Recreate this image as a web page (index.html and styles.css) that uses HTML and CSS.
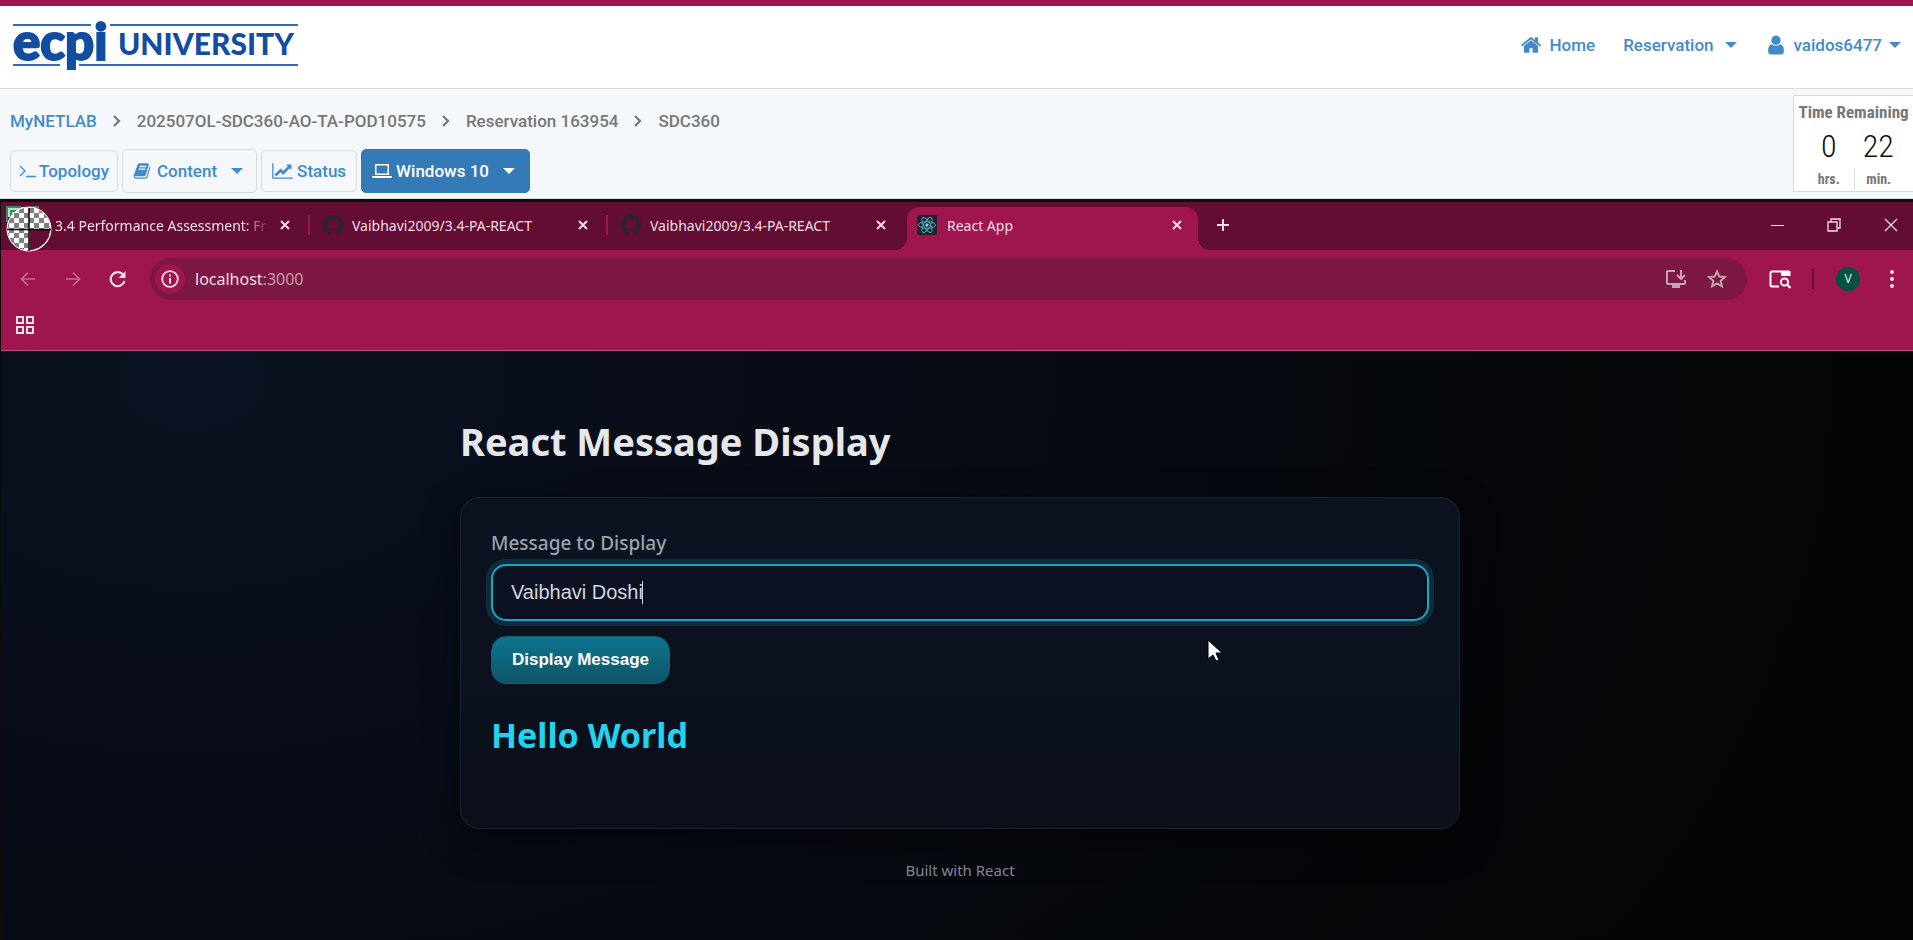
FILE: index.html
```
<!DOCTYPE html>
<html lang="en">
<head>
<meta charset="utf-8">
<title>MyNETLAB - Windows 10</title>
<link rel="stylesheet" href="styles.css">
</head>
<body>
<svg class="defs" aria-hidden="true">
  <symbol id="caret" viewBox="0 0 12 6"><path fill="currentColor" d="M0 0h12L6 6z"/></symbol>
  <symbol id="chev" viewBox="0 0 8 12"><path fill="none" stroke="currentColor" stroke-width="2.200" d="M1 1l5 5-5 5"/></symbol>
  <symbol id="x" viewBox="0 0 10 10"><path fill="none" stroke="currentColor" stroke-width="2" d="M1 1l8 8M9 1L1 9"/></symbol>
  <symbol id="github" viewBox="0 0 16 16"><path fill="#24292e" d="M8 0C3.58 0 0 3.58 0 8c0 3.54 2.29 6.53 5.47 7.59.4.07.55-.17.55-.38 0-.19-.01-.82-.01-1.49-2.01.37-2.53-.49-2.69-.94-.09-.23-.48-.94-.82-1.13-.28-.15-.68-.52-.01-.53.63-.01 1.08.58 1.23.82.72 1.21 1.87.87 2.33.66.07-.52.28-.87.51-1.07-1.78-.2-3.64-.89-3.64-3.95 0-.87.31-1.59.82-2.15-.08-.2-.36-1.02.08-2.12 0 0 .67-.21 2.2.82.64-.18 1.32-.27 2-.27s1.36.09 2 .27c1.53-1.04 2.2-.82 2.2-.82.44 1.1.16 1.92.08 2.12.51.56.82 1.27.82 2.15 0 3.07-1.87 3.75-3.65 3.95.29.25.54.73.54 1.48 0 1.07-.01 1.93-.01 2.2 0 .21.15.46.55.38A8.01 8.01 0 0 0 16 8c0-4.42-3.58-8-8-8z"/></symbol>
</svg>

<header class="site-header">
  <a class="logo" href="#" aria-label="ECPI University">
    <svg width="287" height="54" viewBox="0 0 287 54">
      <g fill="#3b6ab2"><path d="M1 4h78v2H1zM98 4h188v2H98zM1 44h47v2H1zM67 44h219v2H67z"/></g>
      <text class="logo-mark" x="1" y="40">ecpi</text>
      <text class="logo-word" x="106" y="35">UNIVERSITY</text>
    </svg>
  </a>
  <nav class="main-nav">
    <a class="home" href="#"><svg width="22" height="22" viewBox="0 0 1792 1792"><path fill="currentColor" d="M1472 992v480q0 26-19 45t-45 19h-384v-384h-256v384h-384q-26 0-45-19t-19-45v-480q0-1 .5-3t.5-3l575-474 575 474q1 2 1 6zm223-69l-62 74q-8 9-21 11h-3q-13 0-21-7l-692-577-692 577q-12 8-24 7-13-2-21-11l-62-74q-8-10-7-23.5t11-21.5l719-599q32-26 76-26t76 26l244 204v-195q0-14 9-23t23-9h192q14 0 23 9t9 23v408l219 182q10 8 11 21.5t-7 23.5z"/></svg>Home</a>
    <a class="reservation" href="#">Reservation<svg class="caret" width="12" height="6"><use href="#caret"/></svg></a>
    <a class="user" href="#"><svg width="22" height="22" viewBox="0 0 1792 1792"><path fill="currentColor" d="M1536 1399q0 109-62.5 187t-150.5 78h-854q-88 0-150.5-78t-62.5-187q0-85 8.5-160.5t31.5-152 58.5-131 94-89 134.5-34.5q131 128 313 128t313-128q76 0 134.5 34.5t94 89 58.5 131 31.5 152 8.5 160.5zm-256-887q0 159-112.5 271.5t-271.5 112.5-271.5-112.5-112.5-271.5 112.5-271.5 271.5-112.5 271.5 112.5 112.5 271.5z"/></svg>vaidos6477<svg class="caret" width="12" height="6"><use href="#caret"/></svg></a>
  </nav>
</header>

<section class="lab-bar">
  <div class="lab-left">
    <nav class="crumbs" aria-label="Breadcrumb">
      <a href="#">MyNETLAB</a><svg width="8" height="12"><use href="#chev"/></svg>
      <span>202507OL-SDC360-AO-TA-POD10575</span><svg width="8" height="12"><use href="#chev"/></svg>
      <span>Reservation 163954</span><svg width="8" height="12"><use href="#chev"/></svg>
      <span>SDC360</span>
    </nav>
    <div class="lab-tabs">
      <button class="lab-tab topology" type="button"><svg width="17" height="16" viewBox="0 0 17 16"><path fill="none" stroke="currentColor" stroke-width="1.3" d="M1 3l5 5-5 5M7 13.500h10"/></svg>Topology</button>
      <button class="lab-tab tall content" type="button"><svg width="18" height="18" viewBox="0 0 1792 1792"><path fill="currentColor" d="M1703 478q40 57 18 129l-275 906q-19 64-76.500 107.500t-122.500 43.500h-923q-77 0-148.500-53.500t-99.500-131.500q-24-67-2-127 0-4 3-27t4-37q1-8-3-21.500t-3-19.500q2-11 8-21t16.500-23.500 16.500-23.500q23-38 45-91.500t30-91.500q3-10 .5-30t-.5-28q3-11 17-28t17-23q21-36 42-92t25-90q1-9-2.500-32t.5-28q4-13 22-30.500t22-22.500q19-26 42.500-84.500t27.500-96.500q1-8-3-25.500t-2-26.500q2-8 9-18t18-23 17-21q8-12 16.500-30.500t15-35 16-36 19.500-32 26.500-23.500 36-11.500 47.500 5.500l-1 3q38-9 51-9h761q74 0 114 56t18 130l-274 906q-36 119-71.500 153.500t-128.500 34.500h-869q-27 0-38 15-11 16-1 43 24 70 144 70h923q29 0 56-15.500t35-41.500l300-987q7-22 5-57 38 15 59 43zm-1064 2q-4 13 2 22.500t20 9.500h608q13 0 25.500-9.500t16.500-22.500l21-64q4-13-2-22.500t-20-9.500h-608q-13 0-25.500 9.500t-16.500 22.500zm-83 256q-4 13 2 22.500t20 9.500h608q13 0 25.500-9.500t16.500-22.500l21-64q4-13-2-22.500t-20-9.500h-608q-13 0-25.500 9.500t-16.500 22.500z"/></svg>Content<svg class="caret" width="12" height="6"><use href="#caret"/></svg></button>
      <button class="lab-tab status" type="button"><svg width="21" height="18" viewBox="-128 0 2048 1792"><path fill="currentColor" d="M1920 1536v128h-2048v-1536h128v1408h1920zm-128-1248v435q0 21-19.500 29.500t-35.500-7.500l-121-121-633 633q-10 10-23 10t-23-10l-233-233-416 416-192-192 585-585q10-10 23-10t23 10l233 233 464-464-121-121q-16-16-7.500-35.500t29.500-19.500h435q14 0 23 9t9 23z"/></svg>Status</button>
      <button class="lab-tab tall active" type="button"><svg width="20" height="16" viewBox="0 0 20 16"><path fill="none" stroke="currentColor" stroke-width="1.500" d="M3.750 1.750h12.500v9.500H3.750z"/><path fill="currentColor" d="M0 13h20v1l-1 1H1l-1-1z"/></svg>Windows 10<svg class="caret" width="12" height="6"><use href="#caret"/></svg></button>
    </div>
  </div>
  <div class="timer">
    <div class="timer-title">Time Remaining</div>
    <div class="timer-cells">
      <div class="cell"><div class="num">0</div><div class="unit">hrs.</div></div>
      <div class="cell"><div class="num">22</div><div class="unit">min.</div></div>
    </div>
  </div>
</section>

<main class="vm">
  <svg class="touch" width="46" height="46" viewBox="0 0 46 46">
    <defs>
      <pattern id="checks" width="10" height="10" patternUnits="userSpaceOnUse" patternTransform="translate(3 2)"><path fill="#fff" d="M0 0h10v10H0z"/><path fill="#808080" d="M0 0h5v5H0zM5 5h5v5H5z"/></pattern>
    </defs>
    <path fill="#b9dcc6" d="M1 1h28v10H1z"/><path fill="none" stroke="#2f8f5b" stroke-width="2" d="M1 16V1h14M5 12V5h8M27 1h6"/>
    <circle cx="23" cy="23" r="22" fill="url(#checks)"/>
    <path fill="#640d33" d="M24 24h20a21 21 0 0 1-20 20z"/>
    <circle cx="23" cy="23" r="22" fill="none" stroke="#fff" stroke-width="1"/>
    <path stroke="#000" stroke-width="1.500" d="M23 2v43M1 23.500h44"/>
  </svg>
  <div class="tabstrip">
    <div class="tab first"><span class="title fade">3.4 Performance Assessment: Fr</span><button type="button" aria-label="Close tab"><svg width="10" height="10"><use href="#x"/></svg></button></div>
    <div class="tab sep"><svg width="20" height="20"><use href="#github"/></svg><span class="title">Vaibhavi2009/3.4-PA-REACT</span><button type="button" aria-label="Close tab"><svg width="10" height="10"><use href="#x"/></svg></button></div>
    <div class="tab sep"><svg width="20" height="20"><use href="#github"/></svg><span class="title">Vaibhavi2009/3.4-PA-REACT</span><button type="button" aria-label="Close tab"><svg width="10" height="10"><use href="#x"/></svg></button></div>
    <div class="tab current">
      <svg width="20" height="20" viewBox="0 0 20 20"><rect width="20" height="20" rx="2" fill="#20232a"/><g fill="none" stroke="#4fa9bf"><ellipse cx="10" cy="10" rx="8.500" ry="3.300"/><ellipse cx="10" cy="10" rx="8.500" ry="3.300" transform="rotate(60 10 10)"/><ellipse cx="10" cy="10" rx="8.500" ry="3.300" transform="rotate(120 10 10)"/></g><circle cx="10" cy="10" r="1.700" fill="#61dafb"/></svg>
      <span class="title">React App</span><button type="button" aria-label="Close tab"><svg width="10" height="10"><use href="#x"/></svg></button></div>
    <button class="newtab" type="button" aria-label="New tab"><svg width="14" height="14" viewBox="0 0 14 14"><path stroke="currentColor" stroke-width="2" d="M7 1v12M1 7h12"/></svg></button>
    <div class="win">
      <button type="button" aria-label="Minimize"><svg width="14" height="14" viewBox="0 0 14 14"><path stroke="currentColor" d="M1 7.500h13"/></svg></button>
      <button type="button" aria-label="Restore"><svg width="14" height="14" viewBox="0 0 14 14"><path fill="none" stroke="currentColor" stroke-width="1.300" d="M1 4h9v9H1zM4 4V1h9v9h-3"/></svg></button>
      <button type="button" aria-label="Close"><svg width="14" height="14" viewBox="0 0 14 14"><path stroke="currentColor" stroke-width="1.300" d="M1 1l12 12M13 1L1 13"/></svg></button>
    </div>
  </div>

  <div class="toolbar">
    <button class="tool dim" type="button" aria-label="Back"><svg width="16" height="16" viewBox="0 0 16 16"><path fill="none" stroke="currentColor" stroke-width="1.700" d="M15 8H2M8 1.500L1.500 8 8 14.500"/></svg></button>
    <button class="tool dim" type="button" aria-label="Forward"><svg width="16" height="16" viewBox="0 0 16 16"><path fill="none" stroke="currentColor" stroke-width="1.700" d="M1 8h13M8 1.500L14.500 8 8 14.500"/></svg></button>
    <button class="tool" type="button" aria-label="Reload"><svg width="18" height="18" viewBox="0 0 18 18"><path fill="none" stroke="currentColor" stroke-width="2.200" d="M15.500 11A7 7 0 1 1 14 4.500"/><path fill="currentColor" d="M16.500 1v7h-7z"/></svg></button>
    <div class="omnibox">
      <button class="info" type="button" aria-label="Site information"><svg width="18" height="18" viewBox="0 0 18 18"><circle cx="9" cy="9" r="7.800" fill="none" stroke="currentColor" stroke-width="1.800"/><path fill="currentColor" d="M8 4.500h2v2H8zM8 8h2v5.500H8z"/></svg></button>
      <span class="url">localhost<span class="port">:3000</span></span>
      <button type="button" aria-label="Install app"><svg width="22" height="20" viewBox="0 0 22 20"><path fill="none" stroke="currentColor" stroke-width="2" d="M10 2H3a1 1 0 0 0-1 1v11a1 1 0 0 0 1 1h16a1 1 0 0 0 1-1v-3M16 1v8M12 6l4 4 4-4"/><path fill="currentColor" d="M7 16h8v3H7z"/></svg></button>
      <button type="button" aria-label="Bookmark"><svg width="20" height="20" viewBox="0 0 20 20"><path fill="none" stroke="currentColor" stroke-width="2" d="M10 2.500l2.300 5.100 5.600.5-4.200 3.700 1.200 5.500L10 14.400l-4.900 2.900 1.200-5.500-4.200-3.700 5.600-.5z"/></svg></button>
    </div>
    <button class="lens" type="button" aria-label="Search this page"><svg width="22" height="20" viewBox="0 0 22 20"><path fill="none" stroke="currentColor" stroke-width="2" d="M10 17.500H3a1.500 1.500 0 0 1-1.500-1.500V4A1.500 1.500 0 0 1 3 2.500h9"/><path fill="currentColor" d="M12 1.500h8a1.500 1.500 0 0 1 1.500 1.500v4H12z"/><circle cx="15.500" cy="13" r="3.600" fill="none" stroke="currentColor" stroke-width="2"/><path stroke="currentColor" stroke-width="2.200" d="M18 15.500l3.500 3.500"/></svg></button>
    <span class="bar"></span>
    <button class="avatar" type="button" aria-label="Profile">V</button>
    <button class="dots" type="button" aria-label="Menu"><svg width="4" height="18" viewBox="0 0 4 18"><g fill="currentColor"><circle cx="2" cy="2" r="2"/><circle cx="2" cy="9" r="2"/><circle cx="2" cy="16" r="2"/></g></svg></button>
  </div>
  <div class="bookmarks">
    <button type="button" aria-label="Apps"><svg width="18" height="18" viewBox="0 0 18 18"><path fill="none" stroke="currentColor" stroke-width="2" d="M1 1h6v6H1zM11 1h6v6h-6zM1 11h6v6H1zM11 11h6v6h-6z"/></svg></button>
  </div>

  <div class="page">
    <div class="app">
      <h1>React Message Display</h1>
      <section class="card">
        <label for="msg">Message to Display</label>
        <div class="field"><input id="msg" type="text" value="Vaibhavi Doshi"><span class="cursor"></span></div>
        <button class="display" type="button">Display Message</button>
        <h2>Hello World</h2>
        <svg class="pointer" width="16" height="24" viewBox="0 0 16 24"><path fill="#fff" stroke="#000" stroke-width="1" d="M1 1v19l5-4 3 6 3-1-3-7h6z"/></svg>
      </section>
      <footer>Built with React</footer>
    </div>
  </div>
</main>
</body>
</html>
```
FILE: styles.css
```
* { box-sizing: border-box; }
body { margin: 0; min-height: 100vh; display: flex; flex-direction: column; font-family: Roboto, "Liberation Sans", sans-serif; background: #f4f8fb; }
svg { display: block; flex: none; }
button { border: 0; background: none; padding: 0; font: inherit; color: inherit; display: flex; align-items: center; justify-content: center; }
a { text-decoration: none; color: #428bca; }
.defs { position: absolute; width: 0; height: 0; }

.site-header { display: flex; justify-content: space-between; align-items: center; height: 89px; padding: 0 12px; border-top: 6px solid #9f154e; border-bottom: 1px solid #d8dbde; background: #fff; }
.logo svg { overflow: visible; }
.logo-mark { font: 900 51px Lato, sans-serif; fill: #124da0; stroke: #124da0; stroke-width: 2; }
.logo-word { font: 900 30px Lato, sans-serif; fill: #124da0; }
.main-nav { display: flex; gap: 28px; padding-bottom: 5px; font-size: 17px; font-weight: 500; }
.main-nav a { display: flex; align-items: center; }
.main-nav .home { gap: 8px; }
.main-nav .reservation { gap: 11px; }
.main-nav .user { gap: 7px; }

.lab-bar { display: flex; justify-content: space-between; align-items: flex-start; height: 110px; border-bottom: 1px solid #dcdfe1; }
.lab-left { padding: 20px 10px 0; }
.crumbs { display: flex; align-items: center; gap: 16px; height: 24px; font-size: 17px; font-weight: 500; color: #777; }
.lab-tabs { display: flex; align-items: center; gap: 4px; margin-top: 16px; }
.lab-tab { height: 42px; padding: 0 10px; gap: 4px; border: 1px solid #d9dcdf; border-radius: 5px; font-size: 17px; font-weight: 500; color: #428bca; }
.lab-tab.topology { padding: 0 8px; gap: 3px; }
.lab-tab.tall { height: 44px; padding: 0 13px 0 10px; gap: 6px; }
.lab-tab.tall .caret { margin-left: 8px; }
.lab-tab.active { padding: 0 14px 0 10px; gap: 4px; background: #337ab7; border-color: #337ab7; color: #fff; }
.lab-tab.active .caret { margin-left: 10px; }
.timer { margin-top: 6px; padding: 4px 2px 0; width: 120px; height: 97px; border: 1px solid #d8dadc; border-right: 0; background: #fff; text-align: center; font-family: "Roboto Condensed", Roboto, sans-serif; }
.timer-title { font-size: 17px; line-height: 24px; font-weight: 700; color: #777; }
.timer-cells { display: grid; grid-template-columns: 1fr 1fr; padding: 0 8px; }
.num { font-size: 32px; line-height: 44px; font-weight: 300; color: #111; }
.unit { font-size: 14px; line-height: 22px; font-weight: 700; color: #777; }
.cell + .cell .unit { border-left: 1px solid #d8dadc; }

.vm { position: relative; flex: 1; display: flex; flex-direction: column; border-top: 3px solid #0c0c10; border-left: 1px solid #0c0c10; background: #9f154e; color: #f3dde6; font-family: "Noto Sans", "Open Sans", sans-serif; overflow: hidden; }
.touch { position: absolute; left: 5px; top: 4px; z-index: 2; }
.tabstrip { display: flex; height: 48px; padding-left: 9px; background: #640d33; font-size: 14px; }
.tab { display: flex; align-items: center; width: 298px; height: 46px; padding: 0 18px 0 15px; position: relative; }
.tab.first { padding-left: 45px; }
.tab .title { flex: 1; margin-left: 9px; white-space: nowrap; overflow: hidden; }
.tab.first .title { flex: none; margin: 0 auto 0 0; overflow: visible; }
.fade { mask-image: linear-gradient(90deg, #000 88%, rgba(0, 0, 0, .15)); -webkit-mask-image: linear-gradient(90deg, #000 88%, rgba(0, 0, 0, .15)); }
.tab.sep::before { content: ""; position: absolute; left: 0; top: 13px; width: 2px; height: 20px; background: #9f154e; }
.tab.current { width: 291px; height: 43px; margin: 5px 0 0 3px; padding: 0 16px 7px 10px; border-radius: 12px 12px 0 0; background: #9f154e; }
.tab.current .title { margin-left: 10px; }
.tab.current::before, .tab.current::after { content: ""; position: absolute; bottom: 0; width: 12px; height: 12px; }
.tab.current::before { left: -12px; background: radial-gradient(circle at 0 0, #640d33 12px, #9f154e 12px); }
.tab.current::after { right: -12px; background: radial-gradient(circle at 100% 0, #640d33 12px, #9f154e 12px); }
.newtab { width: 49px; height: 46px; }
.win { display: flex; margin-left: auto; margin-right: -6px; height: 46px; }
.win button { width: 57px; }

.toolbar { display: flex; align-items: center; height: 57px; padding: 0 19px 0 4px; }
.tool { width: 45px; height: 40px; }
.dim { color: #c16b90; }
.omnibox { flex: 1; display: flex; align-items: center; height: 42px; margin: 0 22px 0 10px; padding: 0 20px 0 5px; border-radius: 21px; background: #7d1843; color: #c4a3b2; }
.omnibox button + button { margin-left: 20px; }
.info { width: 30px; height: 30px; border-radius: 50%; background: #9f154e; color: #f3dde6; }
.url { flex: 1; margin-left: 10px; font-size: 16px; color: #f3dde6; }
.port { color: #c79cb0; }
.lens { color: #fff; }
.bar { width: 2px; height: 20px; margin: 0 22px 0 21px; background: #640d33; }
.avatar { width: 24px; height: 24px; border-radius: 50%; background: #045041; color: #d9f0e6; font-size: 12px; }
.dots { margin-left: 30px; }
.bookmarks { height: 44px; padding: 9px 15px; border-bottom: 1px solid #b9517c; }

.page { flex: 1; padding-left: 6px; background: radial-gradient(1700px 1150px at 10% 5%, #0a1120 0%, #070b14 45%, #040609 80%, #040506 100%); }
.app { max-width: 1000px; margin: 0 auto; padding: 64px 0 20px; }
h1 { margin: 0; font-size: 38px; line-height: 52px; font-weight: 700; color: #e5e7eb; }
.card { position: relative; margin-top: 30px; min-height: 332px; padding: 30px; border: 1px solid #1a2431; border-radius: 20px; background: linear-gradient(#0c1320, #0a0f1a); box-shadow: 0 12px 38px rgba(0, 0, 0, .45); }
.card label { display: block; font-size: 19px; line-height: 30px; font-weight: 500; color: #9ca3af; }
.field { position: relative; margin-top: 6px; }
.field input { display: block; width: 100%; height: 57px; padding: 0 18px; border: 2px solid #1ba7c0; border-radius: 15px; outline: 0; box-shadow: 0 0 0 5px #0e2c3b; background: #0c1122; color: #d3d6dc; font: 20px "Liberation Sans", Arial, sans-serif; }
.cursor { position: absolute; left: 151px; top: 17px; width: 1px; height: 23px; background: #d3d6dc; }
.display { margin-top: 15px; height: 48px; padding: 0 20px; border: 1px solid #165e72; border-radius: 15px; background: linear-gradient(#0e7490, #0e5568); color: #fff; font: 700 17px "Liberation Sans", Arial, sans-serif; }
h2 { margin: 28px 0 0; font-size: 34px; line-height: 46px; font-weight: 700; color: #22d3ee; }
.pointer { position: absolute; left: 746px; top: 141px; }
footer { margin-top: 30px; text-align: center; font-size: 15px; line-height: 22px; color: #858b96; }
```
